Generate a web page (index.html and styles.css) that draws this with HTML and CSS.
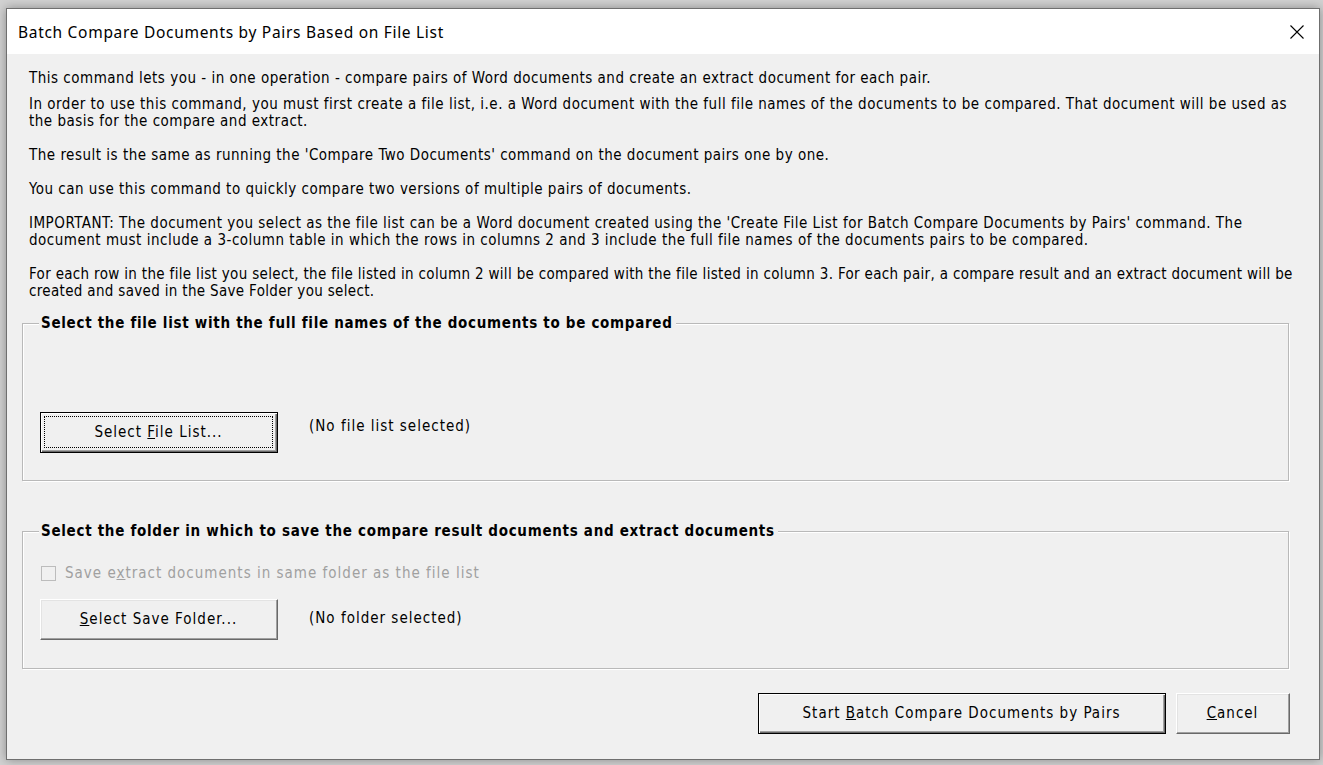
FILE: index.html
```html
<!DOCTYPE html>
<html>
<head>
<meta charset="utf-8">
<link rel="stylesheet" href="styles.css">
</head>
<body>
<div class="window">
  <div class="titlebar">
    <span class="title">Batch Compare Documents by Pairs Based on File List</span>
    <svg class="close" width="14" height="14" viewBox="0 0 14 14"><path d="M0.5 0.5 L13.5 13.5 M13.5 0.5 L0.5 13.5" stroke="#000" stroke-width="1.1" fill="none"/></svg>
  </div>
  <div class="content">
    <p class="intro">This command lets you - in one operation - compare pairs of Word documents and create an extract document for each pair.</p>
    <p>In order to use this command, you must first create a file list, i.e. a Word document with the full file names of the documents to be compared. That document will be used as<br>the basis for the compare and extract.</p>
    <p>The result is the same as running the 'Compare Two Documents' command on the document pairs one by one.</p>
    <p>You can use this command to quickly compare two versions of multiple pairs of documents.</p>
    <p>IMPORTANT: The document you select as the file list can be a Word document created using the 'Create File List for Batch Compare Documents by Pairs' command. The<br>document must include a 3-column table in which the rows in columns 2 and 3 include the full file names of the documents pairs to be compared.</p>
    <p class="last">For each row in the file list you select, the file listed in column 2 will be compared with the file listed in column 3. For each pair, a compare result and an extract document will be<br>created and saved in the Save Folder you select.</p>

    <fieldset class="group group1">
      <legend>Select the file list with the full file names of the documents to be compared</legend>
      <div class="row">
        <div class="btn default"><span class="focus"><span>Select <u>F</u>ile List...</span></span></div>
        <span class="status">(No file list selected)</span>
      </div>
    </fieldset>

    <fieldset class="group group2">
      <legend>Select the folder in which to save the compare result documents and extract documents</legend>
      <div class="check">
        <span class="box"></span>
        <span class="disabled">Save e<u>x</u>tract documents in same folder as the file list</span>
      </div>
      <div class="row">
        <div class="btn"><span class="focus nofocus"><span><u>S</u>elect Save Folder...</span></span></div>
        <span class="status">(No folder selected)</span>
      </div>
    </fieldset>

    <div class="actions">
      <div class="btn default start"><span class="focus nofocus"><span>Start <u>B</u>atch Compare Documents by Pairs</span></span></div>
      <div class="btn cancel"><span class="focus nofocus"><span><u>C</u>ancel</span></span></div>
    </div>
  </div>
</div>
</body>
</html>
```

FILE: styles.css
```css
html, body {
  margin: 0;
  padding: 0;
}
body {
  background: #d2d2d2;
  padding: 8px 0 0 6px;
  height: 765px;
  box-sizing: border-box;
  overflow: hidden;
  font-family: "DejaVu Sans Condensed", "DejaVu Sans", sans-serif;
  font-stretch: condensed;
  font-size: 15px;
  letter-spacing: 1px;
  color: #000;
}
.window {
  width: 1314px;
  height: 752px;
  box-sizing: border-box;
  border: 1px solid #6f6f6f;
  background: #f0f0f0;
  box-shadow: 0 0 10px rgba(0,0,0,0.35);
  display: flex;
  flex-direction: column;
}
.titlebar {
  height: 45px;
  flex: none;
  background: #fff;
  display: flex;
  align-items: center;
  justify-content: space-between;
  padding: 0 15px 0 11px;
}
.title {
  font-family: "Noto Sans", "Open Sans", sans-serif;
  font-stretch: normal;
  font-size: 15.5px;
  letter-spacing: 0.7px;
  color: #000;
}
.close {
  display: block;
}
.content {
  padding: 16px 10px 0 22px;
  flex: 1;
  display: flex;
  flex-direction: column;
}
p {
  margin: 0 0 17px 0;
  line-height: 17px;
  white-space: nowrap;
  letter-spacing: 0.5px;
}
p.intro {
  margin-bottom: 9px;
}
p.last {
  margin-bottom: 15px;
  letter-spacing: 0.33px;
}
.group {
  margin: 0 20px 0 -7px;
  padding: 0;
  border: 1px solid #b9b9b9;
  box-shadow: 1px 1px 0 #fff, inset 1px 1px 0 #fff;
  min-width: 0;
}
.group legend {
  font-weight: bold;
  letter-spacing: 0.7px;
  line-height: 17px;
  margin-left: 16px;
  padding: 0 3px 0 2px;
  background: #f0f0f0;
}
.group1 {
  height: 166px;
  box-sizing: border-box;
}
.group1 .row {
  margin-top: 80px;
}
.group1 .status {
  margin-top: 6px;
}
.group2 {
  margin-top: 42px;
  height: 146px;
  box-sizing: border-box;
}
.row {
  display: flex;
  align-items: flex-start;
  padding-left: 17px;
}
.status {
  margin-left: 31px;
  line-height: 17px;
}
.group2 .row {
  margin-top: 17px;
}
.group2 .status {
  margin-top: 11px;
}
.check {
  display: flex;
  align-items: center;
  padding-left: 18px;
  margin-top: 25px;
  line-height: 17px;
}
.box {
  width: 15px;
  height: 15px;
  box-sizing: border-box;
  border: 1px solid #bcbcbc;
  background: #f0f0f0;
  margin-right: 9px;
}
.disabled {
  color: #a0a0a0;
}
.btn {
  width: 238px;
  height: 41px;
  box-sizing: border-box;
  background: #f0f0f0;
  border: 1px solid;
  border-color: #fff #696969 #696969 #fff;
  box-shadow: inset -1px -1px 0 #a0a0a0, inset 1px 1px 0 #e3e3e3;
  display: flex;
  padding: 3px 4px 4px 3px;
}
.btn.default {
  border-color: #000;
  box-shadow: inset 1px 1px 0 #fff, inset -1px -1px 0 #696969, inset -2px -2px 0 #a0a0a0;
}
.focus {
  flex: 1;
  display: flex;
  align-items: center;
  justify-content: center;
  border: 1px dotted #000;
  line-height: 17px;
  white-space: nowrap;
}
.focus.nofocus {
  border-color: transparent;
}
.actions {
  display: flex;
  justify-content: flex-end;
  gap: 10px;
  margin-top: 24px;
  margin-right: 19px;
}
.start {
  width: 408px;
}
.cancel {
  width: 114px;
}
```
